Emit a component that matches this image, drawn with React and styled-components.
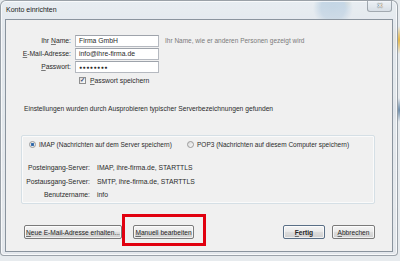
import styled, { createGlobalStyle } from "styled-components";

const GlobalStyle = createGlobalStyle`
  html, body {
    margin: 0;
    padding: 0;
    overflow: hidden;
  }
  body {
    font-family: "Liberation Sans", Arial, sans-serif;
    font-size: 6.8px;
    color: #2b2b2b;
  }
  u {
    text-decoration-color: rgba(40, 40, 40, 0.6);
    text-underline-offset: 1px;
  }
`;

const fields = [
  { key: "N", pre: "Ihr ", label: "ame:", value: "Firma GmbH", hint: "Ihr Name, wie er anderen Personen gezeigt wird" },
  { key: "E", pre: "", label: "-Mail-Adresse:", value: "info@ihre-firma.de" },
  { key: "P", pre: "", label: "asswort:", value: "●●●●●●●●", secret: true },
];

const servers = [
  { label: "Posteingang-Server:", value: "IMAP, ihre-firma.de, STARTTLS" },
  { label: "Postausgang-Server:", value: "SMTP, ihre-firma.de, STARTTLS" },
  { label: "Benutzername:", value: "info" },
];

export default function App() {
  return (
    <>
      <GlobalStyle />
      <DesktopUI>
        <WindowUI>
          <TitleBarUI>
            <TitleUI>Konto einrichten</TitleUI>
            <CloseButtonUI>✕</CloseButtonUI>
          </TitleBarUI>
          <ClientUI>
            <FormGridUI>
              {fields.map((f) => (
                <FieldRow key={f.key}>
                  <LabelUI>
                    {f.pre}
                    <u>{f.key}</u>
                    {f.label}
                  </LabelUI>
                  <InputUI $secret={f.secret}>{f.value}</InputUI>
                  <HintUI>{f.hint}</HintUI>
                </FieldRow>
              ))}
            </FormGridUI>
            <CheckRowUI>
              <CheckboxUI>✓</CheckboxUI>
              <span>
                <u>P</u>asswort speichern
              </span>
            </CheckRowUI>
            <InfoTextUI>
              Einstellungen wurden durch Ausprobieren typischer Serverbezeichnungen gefunden
            </InfoTextUI>
            <GroupBoxUI>
              <RadioRowUI>
                <RadioOption $width="158px">
                  <RadioUI $checked />
                  IMAP (Nachrichten auf dem Server speichern)
                </RadioOption>
                <RadioOption>
                  <RadioUI />
                  POP3 (Nachrichten auf diesem Computer speichern)
                </RadioOption>
              </RadioRowUI>
              <ServerGridUI>
                {servers.map((s) => (
                  <ServerRow key={s.label}>
                    <ServerLabelUI>{s.label}</ServerLabelUI>
                    <span>{s.value}</span>
                  </ServerRow>
                ))}
              </ServerGridUI>
            </GroupBoxUI>
            <ButtonBarUI>
              <ButtonGroupUI>
                <ButtonUI $width="98px">
                  <u>N</u>eue E-Mail-Adresse erhalten...
                </ButtonUI>
                <HighlightUI>
                  <ButtonUI $width="61px">
                    <u>M</u>anuell bearbeiten
                  </ButtonUI>
                </HighlightUI>
              </ButtonGroupUI>
              <ButtonGroupUI $gap="7px">
                <ButtonUI $width="42px" $default>
                  <u>F</u>ertig
                </ButtonUI>
                <ButtonUI $width="43px">
                  <u>A</u>bbrechen
                </ButtonUI>
              </ButtonGroupUI>
            </ButtonBarUI>
          </ClientUI>
        </WindowUI>
      </DesktopUI>
    </>
  );
}

const DesktopUI = styled.div`
  width: 400px;
  height: 261px;
  background:
    radial-gradient(circle at 333px 8px, #3d7bb0 0, #4b86b8 12px, transparent 20px),
    radial-gradient(circle at 344px 2px, #e9b53a 0, transparent 8px),
    radial-gradient(circle at 400px 40px, #e6b642 0, transparent 14px),
    radial-gradient(circle at 400px 110px, #6a8aa8 0, transparent 12px),
    #e7ebee;
`;

const WindowUI = styled.div`
  width: 398px;
  height: 256px;
  display: flex;
  flex-direction: column;
  box-sizing: border-box;
  border: 1px solid rgba(80, 90, 100, 0.5);
  border-radius: 6px 6px 4px 4px;
  background: linear-gradient(180deg, rgba(232, 238, 243, 0.78), rgba(226, 231, 236, 0.9) 30px, rgba(228, 232, 236, 0.95));
  box-shadow: inset 0 0 0 1px rgba(255, 255, 255, 0.7);
`;

const TitleBarUI = styled.div`
  height: 18px;
  display: flex;
  justify-content: space-between;
  align-items: flex-start;
  padding-left: 5px;
  padding-right: 5px;
`;

const TitleUI = styled.div`
  font-size: 7px;
  line-height: 18px;
  color: #1a1a1a;
`;

const CloseButtonUI = styled.div`
  width: 25px;
  height: 11px;
  box-sizing: border-box;
  border: 1px solid rgba(90, 100, 110, 0.5);
  border-top: none;
  border-radius: 0 0 3px 3px;
  background: linear-gradient(180deg, rgba(240, 244, 248, 0.6), rgba(210, 218, 226, 0.7));
  color: #f4f4f4;
  text-shadow: 0 0 1px #555, 0 0 1px #555;
  font-size: 6.5px;
  font-weight: bold;
  line-height: 10px;
  text-align: center;
`;

const ClientUI = styled.div`
  flex: 1;
  margin: 0 4px 3px 4px;
  display: flex;
  flex-direction: column;
  border: 1px solid #8a949e;
  background: #f0f0f0;
`;

const FormGridUI = styled.div`
  display: grid;
  grid-template-columns: 65px 84px auto;
  column-gap: 4px;
  row-gap: 1px;
  margin-top: 15px;
`;

const FieldRow = styled.div`
  display: contents;
`;

const LabelUI = styled.div`
  text-align: right;
  line-height: 12px;
`;

const InputUI = styled.div`
  height: 12px;
  box-sizing: border-box;
  border: 1px solid #b5b9c0;
  border-top-color: #9ea3ab;
  background: #ffffff;
  padding-left: 3px;
  line-height: 10px;
  font-size: ${(p) => (p.$secret ? "5px" : "6.8px")};
  letter-spacing: ${(p) => (p.$secret ? "0.6px" : "0")};
`;

const HintUI = styled.div`
  margin-left: 2px;
  line-height: 12px;
  font-size: 6.5px;
  color: #7a7a7a;
`;

const CheckRowUI = styled.div`
  display: flex;
  align-items: center;
  gap: 4px;
  margin-top: 3px;
  margin-left: 73px;
  height: 9px;
`;

const CheckboxUI = styled.div`
  width: 7px;
  height: 7px;
  box-sizing: border-box;
  border: 1px solid #8f8f8f;
  background: linear-gradient(135deg, #dcdcdc, #fbfbfb);
  color: #3a4b70;
  font-size: 6px;
  line-height: 5px;
  text-align: center;
  font-weight: bold;
`;

const InfoTextUI = styled.div`
  margin-top: 19px;
  margin-left: 18px;
  line-height: 9px;
  font-size: 6.7px;
`;

const GroupBoxUI = styled.div`
  margin-top: 22px;
  margin-left: 15px;
  width: 354px;
  height: 69px;
  box-sizing: border-box;
  border: 1px solid #d5dfe5;
  border-radius: 2px;
  box-shadow: inset 0 0 0 1px #fafafa;
  display: flex;
  flex-direction: column;
`;

const RadioRowUI = styled.div`
  display: flex;
  align-items: center;
  margin-top: 4px;
  padding-left: 7px;
  height: 9px;
  font-size: 6.5px;
`;

const RadioOption = styled.div`
  display: flex;
  align-items: center;
  gap: 3px;
  width: ${(p) => p.$width || "auto"};
`;

const RadioUI = styled.div`
  width: 7px;
  height: 7px;
  box-sizing: border-box;
  border-radius: 50%;
  border: 1px solid #9a9a9a;
  background: ${(p) =>
    p.$checked
      ? "radial-gradient(circle, #2f5d96 0, #3d77b8 1.4px, #e8e8e8 2px)"
      : "linear-gradient(135deg, #d8d8d8, #fafafa)"};
`;

const ServerGridUI = styled.div`
  display: grid;
  grid-template-columns: 68px auto;
  column-gap: 7px;
  row-gap: 4.5px;
  margin-top: 14px;
  line-height: 9px;
`;

const ServerRow = styled.div`
  display: contents;
`;

const ServerLabelUI = styled.span`
  text-align: right;
`;

const ButtonBarUI = styled.div`
  display: flex;
  justify-content: space-between;
  align-items: center;
  margin-top: 21px;
  padding-left: 18px;
  padding-right: 17px;
`;

const ButtonGroupUI = styled.div`
  display: flex;
  align-items: center;
  gap: ${(p) => p.$gap || "11px"};
`;

const ButtonUI = styled.button`
  width: ${(p) => p.$width};
  height: 14px;
  padding: 0;
  box-sizing: border-box;
  font-family: "Liberation Sans", Arial, sans-serif;
  font-size: 6.6px;
  font-weight: ${(p) => (p.$default ? "bold" : "normal")};
  color: #262626;
  border: 1px solid ${(p) => (p.$default ? "#5a6f86" : "#7a7a7a")};
  border-radius: 2px;
  background: linear-gradient(180deg, #f4f4f4 0%, #ebebeb 45%, #dddddd 50%, #cfcfcf 100%);
  box-shadow: inset 0 0 0 1px rgba(255, 255, 255, 0.7);
  white-space: nowrap;
`;

const HighlightUI = styled.div`
  position: relative;
  display: flex;

  &::after {
    content: "";
    position: absolute;
    top: -11px;
    left: -11px;
    right: -12px;
    bottom: -7px;
    border: 3px solid #e1000f;
    pointer-events: none;
  }
`;
